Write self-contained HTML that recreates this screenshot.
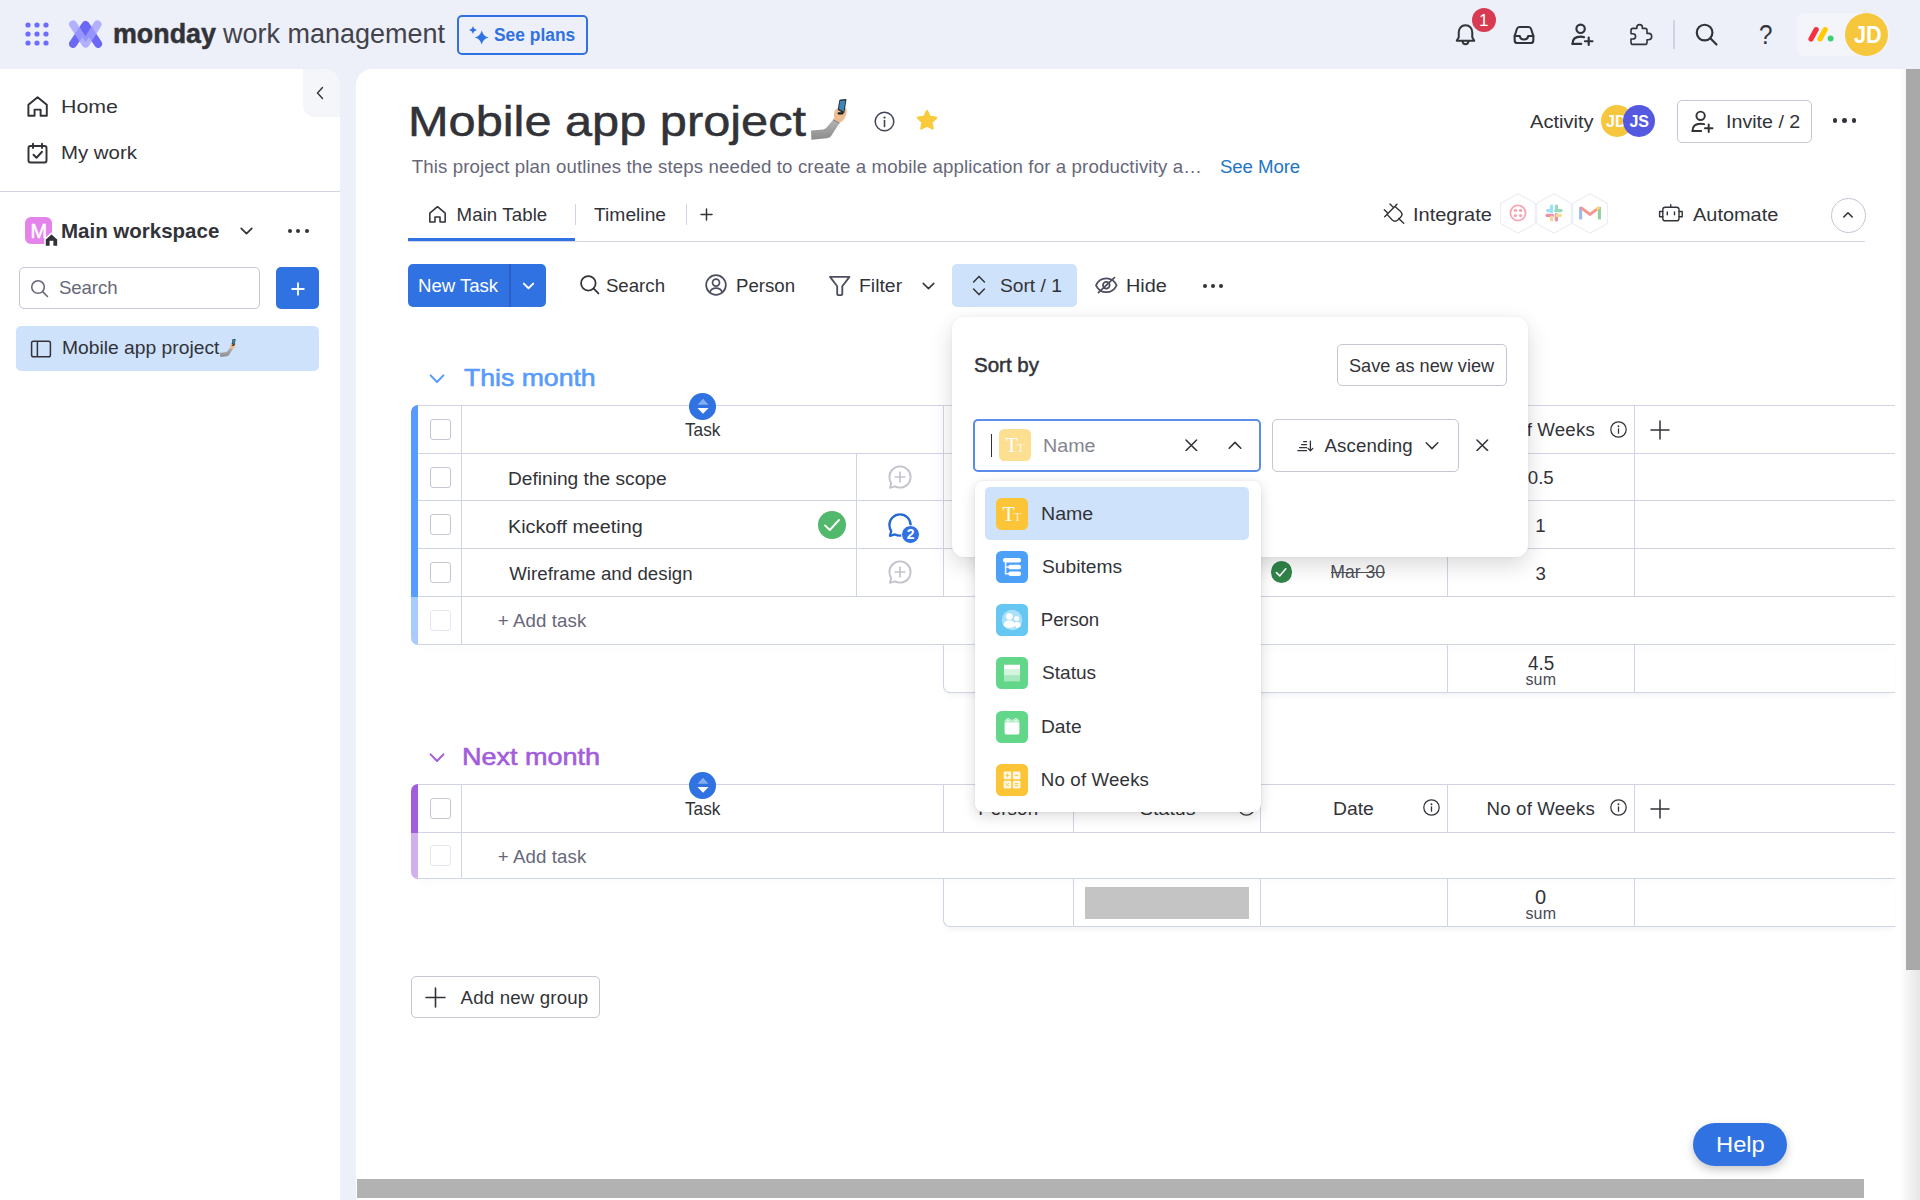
<!DOCTYPE html>
<html lang="en"><head><meta charset="utf-8"><title>Mobile app project</title>
<style>

html,body{margin:0;padding:0}
body{width:1920px;height:1200px;overflow:hidden;position:relative;background:#edeff9;font-family:'Liberation Sans', sans-serif;color:#323338}
div,svg,span{position:absolute;box-sizing:border-box}
.t{white-space:pre;display:block}

</style></head>
<body>
<svg style="left:25px;top:22px;" width="24" height="24" viewBox="0 0 24 24" fill="none"><circle cx="3" cy="3" r="2.6" fill="#6c6cff"/><circle cx="12" cy="3" r="2.6" fill="#6c6cff"/><circle cx="21" cy="3" r="2.6" fill="#6c6cff"/><circle cx="3" cy="12" r="2.6" fill="#6c6cff"/><circle cx="12" cy="12" r="2.6" fill="#6c6cff"/><circle cx="21" cy="12" r="2.6" fill="#6c6cff"/><circle cx="3" cy="21" r="2.6" fill="#6c6cff"/><circle cx="12" cy="21" r="2.6" fill="#6c6cff"/><circle cx="21" cy="21" r="2.6" fill="#6c6cff"/></svg>
<svg style="left:69px;top:19px;" width="34" height="30" viewBox="0 0 34 30" fill="none"><path d="M4.1 24.8 L16.6 6 L29.1 24.8" stroke="#6b68f6" stroke-width="8" stroke-linecap="round" stroke-linejoin="round" fill="none"/><path d="M16.6 9 L21.4 16 L16.6 23 L11.8 16 Z" fill="#6b68f6"/><path d="M4.1 5.4 L16.6 24.6 L28.5 5.4" stroke="#a29fff" stroke-width="8" stroke-linecap="round" stroke-linejoin="round" fill="none" opacity=".78"/></svg>
<span class="t" style="top:18px;font-size:27px;line-height:32px;color:#323338;font-weight:700;transform:scaleX(0.9940);transform-origin:0 0;left:112.97px;-webkit-text-stroke:0.5px #323338;">monday</span>
<span class="t" style="top:18px;font-size:27px;line-height:32px;color:#42434b;transform:scaleX(0.9994);transform-origin:0 0;left:222.92px;">work management</span>
<div style="left:456.7px;top:14.7px;width:131.3px;height:40px;border:2px solid #3072e2;border-radius:5px;"></div>
<svg style="left:465px;top:20px;" width="26" height="26" viewBox="0 0 26 26" fill="none"><path d="M16.7 10.5 C18.24 15.036 19.164 15.96 23.7 17.5 C19.164 19.04 18.24 19.964 16.7 24.5 C15.16 19.964 14.235999999999999 19.04 9.7 17.5 C14.235999999999999 15.96 15.16 15.036 16.7 10.5Z" fill="#3072e2"/><path d="M8 6 C8.88 8.592 9.408 9.12 12 10 C9.408 10.88 8.88 11.408 8 14 C7.12 11.408 6.592 10.88 4 10 C6.592 9.12 7.12 8.592 8 6Z" fill="#3072e2"/></svg>
<span class="t" style="top:24px;font-size:18px;line-height:22px;color:#3072e2;font-weight:700;transform:scaleX(0.9670);transform-origin:0 0;left:494.43px;">See plans</span>
<svg style="left:1453px;top:22px;" width="25" height="25" viewBox="0 0 20 20" fill="none"><path d="M10 2.6 C6.6 2.6 4.6 5.2 4.6 8.2 V12.2 L3 15 H17 L15.4 12.2 V8.2 C15.4 5.2 13.4 2.6 10 2.6Z" stroke="#323338" stroke-width="1.6" stroke-linecap="round" stroke-linejoin="round"/><path d="M7.6 15.4 C7.8 17 8.8 17.8 10 17.8 C11.2 17.8 12.2 17 12.4 15.4" stroke="#323338" stroke-width="1.6" stroke-linecap="round" stroke-linejoin="round"/></svg>
<div style="left:1472px;top:8px;width:24px;height:24px;border-radius:50%;background:#d83a52;"></div>
<span class="t" style="top:10px;font-size:17px;line-height:21px;color:#fff;left:1479.08px;">1</span>
<svg style="left:1511px;top:22px;" width="26" height="26" viewBox="0 0 20 20" fill="none"><path d="M2.8 10.8 L4.6 5.2 C4.9 4.3 5.6 3.8 6.5 3.8 H13.5 C14.4 3.8 15.1 4.3 15.4 5.2 L17.2 10.8 V14 C17.2 15.2 16.3 16.2 15 16.2 H5 C3.7 16.2 2.8 15.2 2.8 14 Z" stroke="#323338" stroke-width="1.6" stroke-linecap="round" stroke-linejoin="round"/><path d="M2.8 10.8 H6.8 C7 12.4 8.2 13.4 10 13.4 C11.8 13.4 13 12.4 13.2 10.8 H17.2" stroke="#323338" stroke-width="1.6" stroke-linecap="round" stroke-linejoin="round"/></svg>
<svg style="left:1569px;top:21px;" width="27" height="27" viewBox="0 0 20 20" fill="none"><circle cx="8.6" cy="5.8" r="3.1" stroke="#323338" stroke-width="1.6" stroke-linecap="round" stroke-linejoin="round"/><path d="M2.6 17 C2.6 13.4 5 11.6 8.6 11.6 C9.6 11.6 10.4 11.7 11.2 12" stroke="#323338" stroke-width="1.6" stroke-linecap="round" stroke-linejoin="round"/><path d="M2.6 17 H9" stroke="#323338" stroke-width="1.6" stroke-linecap="round" stroke-linejoin="round"/><path d="M14.6 12.2 V17.8 M11.8 15 H17.4" stroke="#323338" stroke-width="1.6" stroke-linecap="round" stroke-linejoin="round"/></svg>
<svg style="left:1621px;top:14px;" width="40" height="40" viewBox="0 0 40 40" fill="none"><path d="M12 14.4 H15.8 V13.4 C15.8 11.6 17 10.6 18.6 10.6 C20.2 10.6 21.4 11.6 21.4 13.4 V14.4 H24 C25.2 14.4 26 15.2 26 16.4 V19.4 H27.6 C29.6 19.4 30.7 20.8 30.7 22.6 C30.7 24.4 29.6 25.8 27.6 25.8 H26 V28.4 C26 29.6 25.2 30.4 24 30.4 H12 C10.8 30.4 10 29.6 10 28.4 V25 H11.6 C13.4 25 14.6 23.9 14.6 22.4 C14.6 20.9 13.4 19.8 11.6 19.8 H10 V16.4 C10 15.2 10.8 14.4 12 14.4 Z" stroke="#323338" stroke-width="1.6" stroke-linecap="round" stroke-linejoin="round"/></svg>
<div style="left:1673px;top:20px;width:2px;height:29px;background:#d0d4e4;"></div>
<svg style="left:1693px;top:21px;" width="27" height="27" viewBox="0 0 20 20" fill="none"><circle cx="8.6" cy="8.6" r="5.8" stroke="#323338" stroke-width="1.6" stroke-linecap="round" stroke-linejoin="round"/><path d="M13 13 L17.4 17.4" stroke="#323338" stroke-width="1.6" stroke-linecap="round" stroke-linejoin="round"/></svg>
<span class="t" style="top:18px;font-size:28px;line-height:33px;color:#323338;transform:scaleX(0.8639);transform-origin:0 0;left:1759.44px;">?</span>
<div style="left:1797px;top:13px;width:93px;height:43px;border-radius:8px 24px 24px 8px;background:#f3f5fb;"></div>
<svg style="left:1808px;top:25px;" width="27" height="18" viewBox="0 0 27 18" fill="none"><path d="M3 14 L8.2 4.6" stroke="#f6303f" stroke-width="5.2" stroke-linecap="round"/><path d="M12 14 L17.2 4.6" stroke="#ffcb00" stroke-width="5.2" stroke-linecap="round"/><circle cx="22.6" cy="13.6" r="3" fill="#3ecf6e"/></svg>
<div style="left:1845.3px;top:12.8px;width:42.8px;height:42.8px;border-radius:50%;background:#f6c73c;"></div>
<span class="t" style="top:21px;font-size:23px;line-height:28px;color:#fff;font-weight:700;transform:scaleX(0.9438);transform-origin:0 0;left:1853.50px;">JD</span>
<div style="left:0px;top:69px;width:340px;height:1131px;background:#fff;border-radius:0 16px 0 0;"></div>
<div style="left:303px;top:69px;width:37px;height:48px;background:#f5f6fa;border-radius:0 16px 0 12px;"></div>
<svg style="left:312px;top:84px;" width="16" height="18" viewBox="0 0 16 18" fill="none"><path d="M10.5 3.5 L5.5 9 L10.5 14.5" stroke="#323338" stroke-width="1.4" stroke-linecap="round" stroke-linejoin="round"/></svg>
<svg style="left:24.7px;top:93.6px;" width="25.2" height="25.2" viewBox="0 0 20 20" fill="none"><path d="M2.7 8.6 L10 2.6 L17.3 8.6 V17.2 H12.4 V12.4 H7.6 V17.2 H2.7 Z" stroke="#323338" stroke-width="1.55" stroke-linecap="round" stroke-linejoin="round"/></svg>
<span class="t" style="top:95px;font-size:19px;line-height:23px;color:#323338;transform:scaleX(1.1232);transform-origin:0 0;left:60.63px;">Home</span>
<svg style="left:24.5px;top:140.5px;" width="25" height="25" viewBox="0 0 20 20" fill="none"><rect x="2.8" y="4" width="14.4" height="13.2" rx="1.6" stroke="#323338" stroke-width="1.55" stroke-linecap="round" stroke-linejoin="round"/><path d="M6.4 2.2 V5.6 M13.6 2.2 V5.6" stroke="#323338" stroke-width="1.55" stroke-linecap="round" stroke-linejoin="round"/><path d="M6.8 11 L9.2 13.4 L13.6 8.6" stroke="#323338" stroke-width="1.55" stroke-linecap="round" stroke-linejoin="round"/></svg>
<span class="t" style="top:141px;font-size:19px;line-height:23px;color:#323338;transform:scaleX(1.0741);transform-origin:0 0;left:60.71px;">My work</span>
<div style="left:0px;top:191px;width:340px;height:1px;background:#d0d4e4;"></div>
<div style="left:25px;top:217px;width:27px;height:27px;border-radius:6px;background:#e484ea;"></div>
<span class="t" style="top:219px;font-size:20px;line-height:24px;color:#fff;left:30.56px;-webkit-text-stroke:0.5px #fff;">M</span>
<svg style="left:43.5px;top:232px;" width="15" height="16" viewBox="0 0 15 16" fill="none"><path d="M1 7.2 L7.5 1.4 L14 7.2 V14.6 H1 Z" fill="#323338" stroke="#fff" stroke-width="1.6" stroke-linejoin="round"/><rect x="5.6" y="8.8" width="3.8" height="5.8" fill="#fff"/></svg>
<span class="t" style="top:218px;font-size:21px;line-height:25px;color:#323338;font-weight:700;transform:scaleX(0.9757);transform-origin:0 0;left:60.92px;">Main workspace</span>
<svg style="left:239px;top:224px;" width="15" height="14" viewBox="0 0 15 14" fill="none"><path d="M2.2 4.4 L7.5 9.6 L12.8 4.4" stroke="#323338" stroke-width="1.7" stroke-linecap="round" stroke-linejoin="round"/></svg>
<div style="left:287.5px;top:229px;width:4px;height:4px;border-radius:50%;background:#323338;"></div>
<div style="left:296px;top:229px;width:4px;height:4px;border-radius:50%;background:#323338;"></div>
<div style="left:304.5px;top:229px;width:4px;height:4px;border-radius:50%;background:#323338;"></div>
<div style="left:19px;top:267px;width:241px;height:42px;border:1px solid #c3c6d4;border-radius:5px;background:#fff;"></div>
<svg style="left:29px;top:278px;" width="21" height="21" viewBox="0 0 20 20" fill="none"><circle cx="8.6" cy="8.6" r="6" stroke="#676879" stroke-width="1.5"/><path d="M13.2 13.2 L17.6 17.6" stroke="#676879" stroke-width="1.5" stroke-linecap="round"/></svg>
<span class="t" style="top:276px;font-size:18.67px;line-height:23px;color:#676879;letter-spacing:-0.099px;left:58.92px;">Search</span>
<div style="left:276px;top:267px;width:43px;height:42px;border-radius:5px;background:#3072e2;"></div>
<svg style="left:290.5px;top:281.5px;" width="14" height="14" viewBox="0 0 14 14" fill="none"><path d="M7 1.2 V12.8 M1.2 7 H12.8" stroke="#fff" stroke-width="1.8" stroke-linecap="round"/></svg>
<div style="left:16px;top:326px;width:303px;height:45px;border-radius:5px;background:#cfe2fb;"></div>
<svg style="left:29.5px;top:338.5px;" width="22" height="20" viewBox="0 0 22 20" fill="none"><rect x="1.6" y="2.2" width="18.8" height="15.6" rx="1.8" stroke="#323338" stroke-width="1.5"/><path d="M7.4 2.2 V17.8" stroke="#323338" stroke-width="1.5"/></svg>
<span class="t" style="top:336px;font-size:18.67px;line-height:23px;color:#323338;transform:scaleX(1.0327);transform-origin:0 0;left:61.99px;">Mobile app project</span>
<svg style="left:220.4px;top:338.8px;" width="16.28" height="18.04" viewBox="0 0 37 41" fill="none"><defs><linearGradient id="slv" x1="0" y1="0" x2="0" y2="1"><stop offset="0" stop-color="#b4b4b4"/><stop offset="1" stop-color="#8c8c8c"/></linearGradient></defs><path d="M0 31.4 L12 30.4 C14 30.2 15 29.4 16.4 27.6 L22.4 20.6 L28.6 24 L20.4 36.6 C19.2 38.4 18 39 16 39.2 L0.4 40.8 Z" fill="url(#slv)"/><path d="M22.4 20.6 L28.6 24" stroke="#7b7b7b" stroke-width="1.2"/><path d="M23.2 14 C23.4 10.6 26 9.4 28.4 10 L34.6 8.6 C36.2 10 36 14.6 34 18.4 C32.6 21.2 30 23.6 28.2 23.6 L23.4 20.8 C22.8 18.4 23 16 23.2 14 Z" fill="#ecbc92"/><path d="M28.3 1.2 C28.5 0.6 29 0.4 29.6 0.4 L34.4 0.1 C35.1 0.1 35.5 0.6 35.4 1.3 L33.4 13.6 C33.3 14.2 32.8 14.5 32.2 14.2 L27.3 11.2 C26.8 10.9 26.7 10.5 26.8 10 Z" fill="#27323d"/><path d="M29.1 1.9 L34.4 1.5 L32.6 12.6 L27.9 9.8 Z" fill="#3f86b6"/><rect x="26.6" y="13.2" width="5.6" height="2.2" rx="1" fill="#1d1d1f"/></svg>
<div style="left:356px;top:69px;width:1564px;height:1131px;background:#fff;border-radius:16px 0 0 0;"></div>
<span class="t" style="top:97px;font-size:42px;line-height:49px;color:#323338;transform:scaleX(1.1598);transform-origin:0 0;left:408.48px;-webkit-text-stroke:0.5px #323338;">Mobile app project</span>
<svg style="left:810.8px;top:99.2px;" width="37" height="41" viewBox="0 0 37 41" fill="none"><defs><linearGradient id="slv" x1="0" y1="0" x2="0" y2="1"><stop offset="0" stop-color="#b4b4b4"/><stop offset="1" stop-color="#8c8c8c"/></linearGradient></defs><path d="M0 31.4 L12 30.4 C14 30.2 15 29.4 16.4 27.6 L22.4 20.6 L28.6 24 L20.4 36.6 C19.2 38.4 18 39 16 39.2 L0.4 40.8 Z" fill="url(#slv)"/><path d="M22.4 20.6 L28.6 24" stroke="#7b7b7b" stroke-width="1.2"/><path d="M23.2 14 C23.4 10.6 26 9.4 28.4 10 L34.6 8.6 C36.2 10 36 14.6 34 18.4 C32.6 21.2 30 23.6 28.2 23.6 L23.4 20.8 C22.8 18.4 23 16 23.2 14 Z" fill="#ecbc92"/><path d="M28.3 1.2 C28.5 0.6 29 0.4 29.6 0.4 L34.4 0.1 C35.1 0.1 35.5 0.6 35.4 1.3 L33.4 13.6 C33.3 14.2 32.8 14.5 32.2 14.2 L27.3 11.2 C26.8 10.9 26.7 10.5 26.8 10 Z" fill="#27323d"/><path d="M29.1 1.9 L34.4 1.5 L32.6 12.6 L27.9 9.8 Z" fill="#3f86b6"/><rect x="26.6" y="13.2" width="5.6" height="2.2" rx="1" fill="#1d1d1f"/></svg>
<svg style="left:873.1px;top:109.75px;" width="23" height="23" viewBox="0 0 23 23" fill="none"><circle cx="11.5" cy="11.5" r="9.3" stroke="#43445a" stroke-width="1.5"/><circle cx="11.5" cy="7.6" r="1.1" fill="#43445a"/><path d="M11.5 10.6 V16.4" stroke="#43445a" stroke-width="1.6" stroke-linecap="round"/></svg>
<svg style="left:915.3px;top:108.4px;" width="24" height="23" viewBox="0 0 24 23" fill="none"><path d="M12 3.2 L14.7 9 L21 9.8 L16.4 14.2 L17.6 20.4 L12 17.4 L6.4 20.4 L7.6 14.2 L3 9.8 L9.3 9 Z" fill="#f9ca3a" stroke="#f9ca3a" stroke-width="2.4" stroke-linejoin="round"/></svg>
<span class="t" style="top:155px;font-size:18.67px;line-height:23px;color:#676879;letter-spacing:0.119px;left:411.71px;">This project plan outlines the steps needed to create a mobile application for a productivity a…</span>
<span class="t" style="top:155px;font-size:18.67px;line-height:23px;color:#1f76c2;letter-spacing:-0.079px;left:1219.92px;">See More</span>
<span class="t" style="top:110px;font-size:18.67px;line-height:23px;color:#323338;transform:scaleX(1.0763);transform-origin:0 0;left:1530.00px;">Activity</span>
<div style="left:1601.3px;top:105.4px;width:31.8px;height:31.8px;border-radius:50%;background:#f6c73c;"></div>
<span class="t" style="top:112px;font-size:16px;line-height:19px;color:#fff;font-weight:700;left:1606.05px;">JD</span>
<div style="left:1623px;top:105.4px;width:32px;height:31.8px;border-radius:50%;background:#5559df;"></div>
<span class="t" style="top:112px;font-size:16px;line-height:19px;color:#fff;font-weight:700;left:1629.42px;">JS</span>
<div style="left:1677px;top:100px;width:135px;height:43px;border:1px solid #c3c6d4;border-radius:5px;"></div>
<svg style="left:1688.5px;top:108px;" width="27" height="27" viewBox="0 0 20 20" fill="none"><circle cx="8.6" cy="5.8" r="3.1" stroke="#323338" stroke-width="1.45" stroke-linecap="round" stroke-linejoin="round"/><path d="M2.6 17 C2.6 13.4 5 11.6 8.6 11.6 C9.6 11.6 10.4 11.7 11.2 12" stroke="#323338" stroke-width="1.45" stroke-linecap="round" stroke-linejoin="round"/><path d="M2.6 17 H9" stroke="#323338" stroke-width="1.45" stroke-linecap="round" stroke-linejoin="round"/><path d="M14.6 12.2 V17.8 M11.8 15 H17.4" stroke="#323338" stroke-width="1.45" stroke-linecap="round" stroke-linejoin="round"/></svg>
<span class="t" style="top:110px;font-size:18.67px;line-height:23px;color:#323338;transform:scaleX(1.0525);transform-origin:0 0;left:1726.06px;">Invite / 2</span>
<div style="left:1832.6px;top:118.2px;width:4.6px;height:4.6px;border-radius:50%;background:#323338;"></div>
<div style="left:1842.1px;top:118.2px;width:4.6px;height:4.6px;border-radius:50%;background:#323338;"></div>
<div style="left:1851.6px;top:118.2px;width:4.6px;height:4.6px;border-radius:50%;background:#323338;"></div>
<svg style="left:426.5px;top:203.5px;" width="21" height="21" viewBox="0 0 20 20" fill="none"><path d="M2.7 8.6 L10 2.6 L17.3 8.6 V17.2 H12.4 V12.4 H7.6 V17.2 H2.7 Z" stroke="#323338" stroke-width="1.5" stroke-linecap="round" stroke-linejoin="round"/></svg>
<span class="t" style="top:203px;font-size:18.67px;line-height:23px;color:#323338;letter-spacing:0.092px;left:456.54px;">Main Table</span>
<div style="left:574.5px;top:204px;width:1.5px;height:21px;background:#d0d4e4;"></div>
<span class="t" style="top:203px;font-size:18.67px;line-height:23px;color:#323338;transform:scaleX(1.0325);transform-origin:0 0;left:594.20px;">Timeline</span>
<div style="left:685.5px;top:204px;width:1.5px;height:21px;background:#d0d4e4;"></div>
<svg style="left:700px;top:208px;" width="13" height="13" viewBox="0 0 13 13" fill="none"><path d="M6.5 1 V12 M1 6.5 H12" stroke="#323338" stroke-width="1.5" stroke-linecap="round"/></svg>
<div style="left:408px;top:240.7px;width:1457px;height:1.2px;background:#d0d4e4;"></div>
<div style="left:408px;top:237.9px;width:166.5px;height:3.6px;background:#3072e2;"></div>
<svg style="left:1375px;top:195px;" width="40" height="40" viewBox="0 0 40 40" fill="none"><path d="M22 9.3 L9.7 21.7 M15 9 L18.5 12.6 M9.3 14.7 L13.1 18.4 M23.7 23.5 L28.7 28.3" stroke="#323338" stroke-width="1.4" stroke-linecap="round" stroke-linejoin="round"/><path d="M20.3 11.7 L25.6 16.6 C27.4 18.4 27.4 20.4 25.8 22 L22.8 25 C21 26.6 18.6 26.4 17 24.8 L12.3 19.6" stroke="#323338" stroke-width="1.4" stroke-linecap="round" stroke-linejoin="round"/></svg>
<span class="t" style="top:203px;font-size:18.67px;line-height:23px;color:#323338;transform:scaleX(1.0708);transform-origin:0 0;left:1413.44px;">Integrate</span>
<svg style="left:1498.7px;top:193.2px;" width="38" height="41" viewBox="0 0 38 41" fill="none"><polygon points="19,0.8 36.4,10.6 36.4,30.4 19,40.2 1.6,30.4 1.6,10.6" fill="#fff" stroke="#eceef4" stroke-width="1.2" stroke-linejoin="round"/><circle cx="19" cy="20" r="7.6" stroke="#f0506e" stroke-width="1.8" opacity=".5"/><circle cx="16.4" cy="17.4" r="1.7" fill="#f0506e" opacity=".5"/><circle cx="21.6" cy="17.4" r="1.7" fill="#f0506e" opacity=".5"/><circle cx="16.4" cy="22.6" r="1.7" fill="#f0506e" opacity=".5"/><circle cx="21.6" cy="22.6" r="1.7" fill="#f0506e" opacity=".5"/></svg>
<svg style="left:1535px;top:193.2px;" width="38" height="41" viewBox="0 0 38 41" fill="none"><polygon points="19,0.8 36.4,10.6 36.4,30.4 19,40.2 1.6,30.4 1.6,10.6" fill="#fff" stroke="#eceef4" stroke-width="1.2" stroke-linejoin="round"/><g opacity=".5" stroke-width="3.2" stroke-linecap="round"><path d="M16.6 13 V18.4" stroke="#36c5f0"/><path d="M12.6 17.6 H16" stroke="#36c5f0"/><path d="M21.4 27 V21.6" stroke="#e01e5a"/><path d="M25.4 22.4 H22" stroke="#ecb22e"/><path d="M26 17.6 H20.6" stroke="#2eb67d"/><path d="M21.4 13 V16" stroke="#2eb67d"/><path d="M12 22.4 H17.4" stroke="#e01e5a"/><path d="M16.6 27 V24" stroke="#ecb22e"/></g></svg>
<svg style="left:1571.3px;top:193.2px;" width="38" height="41" viewBox="0 0 38 41" fill="none"><polygon points="19,0.8 36.4,10.6 36.4,30.4 19,40.2 1.6,30.4 1.6,10.6" fill="#fff" stroke="#eceef4" stroke-width="1.2" stroke-linejoin="round"/><g opacity=".55"><path d="M9.6 14 V26.4" stroke="#4285f4" stroke-width="3"/><path d="M28.4 14 V26.4" stroke="#34a853" stroke-width="3"/><path d="M9.6 14.4 L19 21.4 L28.4 14.4" stroke="#ea4335" stroke-width="3" stroke-linejoin="round" fill="none"/><path d="M25.6 16.4 L28.4 14.4" stroke="#fbbc04" stroke-width="3"/></g></svg>
<svg style="left:1650px;top:195px;" width="40" height="40" viewBox="0 0 40 40" fill="none"><rect x="12.8" y="12.2" width="16.2" height="13.6" rx="2.4" stroke="#323338" stroke-width="1.4" stroke-linecap="round" stroke-linejoin="round"/><path d="M20.7 9.6 V12.2 M12.8 16.5 H9.6 V21.7 H12.8 M29 16.5 H32.2 V21.7 H29 M17.3 17 V19.8 M24.5 17 V19.8" stroke="#323338" stroke-width="1.4" stroke-linecap="round" stroke-linejoin="round"/></svg>
<span class="t" style="top:203px;font-size:18.67px;line-height:23px;color:#323338;transform:scaleX(1.0682);transform-origin:0 0;left:1693.00px;">Automate</span>
<div style="left:1830.5px;top:197.5px;width:35px;height:35px;border:1px solid #c3c6d4;border-radius:50%;"></div>
<svg style="left:1841px;top:208px;" width="14" height="14" viewBox="0 0 14 14" fill="none"><path d="M2.8 9 L7 4.8 L11.2 9" stroke="#323338" stroke-width="1.6" stroke-linecap="round" stroke-linejoin="round"/></svg>
<div style="left:408px;top:264px;width:138px;height:43px;background:#3072e2;border-radius:5px;"></div>
<div style="left:509.4px;top:264px;width:1.2px;height:43px;background:#2a5fc7;"></div>
<span class="t" style="top:274px;font-size:18.67px;line-height:23px;color:#fff;letter-spacing:-0.052px;left:418.04px;">New Task</span>
<svg style="left:521px;top:279px;" width="15" height="14" viewBox="0 0 15 14" fill="none"><path d="M2.8 4.6 L7.5 9.2 L12.2 4.6" stroke="#fff" stroke-width="1.9" stroke-linecap="round" stroke-linejoin="round"/></svg>
<svg style="left:578px;top:273px;" width="23.5" height="23.5" viewBox="0 0 20 20" fill="none"><circle cx="8.8" cy="8.8" r="6.2" stroke="#323338" stroke-width="1.5" stroke-linecap="round" stroke-linejoin="round"/><path d="M13.4 13.4 L17.4 17.4" stroke="#323338" stroke-width="1.5" stroke-linecap="round" stroke-linejoin="round"/></svg>
<span class="t" style="top:274px;font-size:18.67px;line-height:23px;color:#323338;letter-spacing:0.001px;left:605.92px;">Search</span>
<svg style="left:703.5px;top:273px;" width="24" height="24" viewBox="0 0 20 20" fill="none"><circle cx="10" cy="10" r="8.2" stroke="#4d4e60" stroke-width="1.45" stroke-linecap="round" stroke-linejoin="round"/><circle cx="10" cy="8" r="2.9" stroke="#4d4e60" stroke-width="1.45" stroke-linecap="round" stroke-linejoin="round"/><path d="M4.8 16.2 C5.6 13.6 7.4 12.6 10 12.6 C12.6 12.6 14.4 13.6 15.2 16.2" stroke="#4d4e60" stroke-width="1.45" stroke-linecap="round" stroke-linejoin="round"/></svg>
<span class="t" style="top:274px;font-size:18.67px;line-height:23px;color:#323338;letter-spacing:-0.024px;left:736.04px;">Person</span>
<svg style="left:826.5px;top:272.5px;" width="25.5" height="25.5" viewBox="0 0 20 20" fill="none"><path d="M2.4 3 H17.6 L12 10.4 V16 C12 16.8 11.4 17.4 10.6 17.4 H9.4 C8.6 17.4 8 16.8 8 16 V10.4 Z" stroke="#4d4e60" stroke-width="1.45" stroke-linecap="round" stroke-linejoin="round"/></svg>
<span class="t" style="top:274px;font-size:18.67px;line-height:23px;color:#323338;transform:scaleX(1.0396);transform-origin:0 0;left:859.48px;">Filter</span>
<svg style="left:920.5px;top:279px;" width="15" height="14" viewBox="0 0 15 14" fill="none"><path d="M2.2 4.4 L7.5 9.6 L12.8 4.4" stroke="#323338" stroke-width="1.5" stroke-linecap="round" stroke-linejoin="round"/></svg>
<div style="left:952px;top:264px;width:124.5px;height:43px;background:#cfe2fb;border-radius:5px;"></div>
<svg style="left:969px;top:273px;" width="20" height="25" viewBox="0 0 20 25" fill="none"><path d="M4.6 9 L10 3.4 L15.4 9 M4.6 16 L10 21.6 L15.4 16" stroke="#323338" stroke-width="1.5" stroke-linecap="round" stroke-linejoin="round"/></svg>
<span class="t" style="top:274px;font-size:18.67px;line-height:23px;color:#323338;transform:scaleX(1.0286);transform-origin:0 0;left:999.90px;">Sort / 1</span>
<svg style="left:1094px;top:273.2px;" width="24.6" height="24.6" viewBox="0 0 20 20" fill="none"><path d="M1.6 10 C3.6 6 6.6 4.4 10 4.4 C13.4 4.4 16.4 6 18.4 10 C16.4 14 13.4 15.6 10 15.6 C6.6 15.6 3.6 14 1.6 10Z" stroke="#4d4e60" stroke-width="1.45" stroke-linecap="round" stroke-linejoin="round"/><circle cx="10" cy="10" r="2.7" stroke="#4d4e60" stroke-width="1.45" stroke-linecap="round" stroke-linejoin="round"/><path d="M3.6 16 L16.6 3.8" stroke="#4d4e60" stroke-width="1.45" stroke-linecap="round" stroke-linejoin="round"/></svg>
<span class="t" style="top:274px;font-size:18.67px;line-height:23px;color:#323338;transform:scaleX(1.0647);transform-origin:0 0;left:1126.45px;">Hide</span>
<div style="left:1202.5px;top:283.6px;width:4px;height:4px;border-radius:50%;background:#323338;"></div>
<div style="left:1210.5px;top:283.6px;width:4px;height:4px;border-radius:50%;background:#323338;"></div>
<div style="left:1218.5px;top:283.6px;width:4px;height:4px;border-radius:50%;background:#323338;"></div>
<svg style="left:428.2px;top:372.2px;" width="18" height="14" viewBox="0 0 18 14" fill="none"><path d="M2.6 3.4 L9 10 L15.4 3.4" stroke="#579bfc" stroke-width="2" stroke-linecap="round" stroke-linejoin="round"/></svg>
<span class="t" style="top:363px;font-size:24px;line-height:29px;color:#579bfc;transform:scaleX(1.1089);transform-origin:0 0;left:463.52px;-webkit-text-stroke:0.6px #579bfc;">This month</span>
<div style="left:411px;top:405px;width:7px;height:192px;background:#579bfc;border-radius:7px 0 0 0;"></div>
<div style="left:411px;top:597px;width:7px;height:48px;background:#a9cbfd;border-radius:0 0 0 7px;"></div>
<div style="left:418px;top:638px;width:1477px;height:7px;box-shadow:0 5px 7px -3px rgba(70,80,120,.13);"></div>
<div style="left:418px;top:638px;width:1477px;height:6px;background:#fff;"></div>
<div style="left:418px;top:405px;width:1477px;height:1px;background:#d0d4e4;"></div>
<div style="left:418px;top:453px;width:1477px;height:1px;background:#d0d4e4;"></div>
<div style="left:418px;top:500px;width:1477px;height:1px;background:#d0d4e4;"></div>
<div style="left:418px;top:548px;width:1477px;height:1px;background:#d0d4e4;"></div>
<div style="left:418px;top:596px;width:1477px;height:1px;background:#d0d4e4;"></div>
<div style="left:418px;top:644px;width:1477px;height:1px;background:#d0d4e4;"></div>
<div style="left:461px;top:405px;width:1px;height:240px;background:#d0d4e4;"></div>
<div style="left:943px;top:405px;width:1px;height:192px;background:#d0d4e4;"></div>
<div style="left:1073px;top:405px;width:1px;height:192px;background:#d0d4e4;"></div>
<div style="left:1260px;top:405px;width:1px;height:192px;background:#d0d4e4;"></div>
<div style="left:1447px;top:405px;width:1px;height:192px;background:#d0d4e4;"></div>
<div style="left:1634px;top:405px;width:1px;height:192px;background:#d0d4e4;"></div>
<div style="left:429.5px;top:419.15px;width:21px;height:21px;border:1px solid #c3c6d4;border-radius:3px;background:#fff;"></div>
<span class="t" style="top:418px;font-size:18.67px;line-height:23px;color:#323338;transform:scaleX(0.9229);transform-origin:0 0;left:684.93px;">Task</span>
<span class="t" style="top:418px;font-size:18.67px;line-height:23px;color:#323338;letter-spacing:0.156px;left:978.14px;">Person</span>
<span class="t" style="top:418px;font-size:18.67px;line-height:23px;color:#323338;transform:scaleX(1.0498);transform-origin:0 0;left:1140.44px;">Status</span>
<svg style="left:1237.3px;top:419.55px;" width="19" height="19" viewBox="0 0 19 19" fill="none"><circle cx="9.5" cy="9.5" r="7.7" stroke="#323338" stroke-width="1.25"/><circle cx="9.5" cy="6.3" r="0.95" fill="#323338"/><path d="M9.5 8.8 V13.2" stroke="#323338" stroke-width="1.3" stroke-linecap="round"/></svg>
<span class="t" style="top:418px;font-size:18.67px;line-height:23px;color:#323338;transform:scaleX(1.0348);transform-origin:0 0;left:1333.49px;">Date</span>
<svg style="left:1422.2px;top:419.55px;" width="19" height="19" viewBox="0 0 19 19" fill="none"><circle cx="9.5" cy="9.5" r="7.7" stroke="#323338" stroke-width="1.25"/><circle cx="9.5" cy="6.3" r="0.95" fill="#323338"/><path d="M9.5 8.8 V13.2" stroke="#323338" stroke-width="1.3" stroke-linecap="round"/></svg>
<span class="t" style="top:418px;font-size:18.67px;line-height:23px;color:#323338;letter-spacing:0.177px;left:1486.54px;">No of Weeks</span>
<svg style="left:1608.9px;top:419.55px;" width="19" height="19" viewBox="0 0 19 19" fill="none"><circle cx="9.5" cy="9.5" r="7.7" stroke="#323338" stroke-width="1.25"/><circle cx="9.5" cy="6.3" r="0.95" fill="#323338"/><path d="M9.5 8.8 V13.2" stroke="#323338" stroke-width="1.3" stroke-linecap="round"/></svg>
<svg style="left:1650px;top:420.25px;" width="20" height="20" viewBox="0 0 20 20" fill="none"><path d="M10 1 V19 M1 10 H19" stroke="#323338" stroke-width="1.5" stroke-linecap="round"/></svg>
<div style="left:429.5px;top:466.65px;width:21px;height:21px;border:1px solid #c3c6d4;border-radius:3px;background:#fff;"></div>
<div style="left:856px;top:453px;width:1px;height:48px;background:#d0d4e4;"></div>
<span class="t" style="top:467px;font-size:18.67px;line-height:23px;color:#323338;transform:scaleX(1.0267);transform-origin:0 0;left:507.70px;">Defining the scope</span>
<svg style="left:887px;top:464.15px;" width="26" height="26" viewBox="0 0 26 26" fill="none"><path d="M13 2.4 C18.9 2.4 23.6 7.1 23.6 13 C23.6 18.9 18.9 23.6 13 23.6 C11.2 23.6 9.5 23.2 8 22.4 L3 23.8 L4.2 19 C3 17.3 2.4 15.2 2.4 13 C2.4 7.1 7.1 2.4 13 2.4Z" stroke="#c3c4cd" stroke-width="1.9" stroke-linejoin="round"/><path d="M13 8.2 V17.8 M8.2 13 H17.8" stroke="#c3c4cd" stroke-width="1.7" stroke-linecap="round"/></svg>
<span class="t" style="top:466px;font-size:18.67px;line-height:23px;color:#323338;left:1527.82px;">0.5</span>
<div style="left:429.5px;top:514.05px;width:21px;height:21px;border:1px solid #c3c6d4;border-radius:3px;background:#fff;"></div>
<div style="left:856px;top:500px;width:1px;height:49px;background:#d0d4e4;"></div>
<span class="t" style="top:515px;font-size:18.67px;line-height:23px;color:#323338;transform:scaleX(1.0584);transform-origin:0 0;left:507.66px;">Kickoff meeting</span>
<div style="left:817.8px;top:510.55px;width:28px;height:28px;border-radius:50%;background:#52b86c;"></div>
<svg style="left:821.8px;top:514.55px;" width="20" height="20" viewBox="0 0 20 20" fill="none"><path d="M3 10.4 L7.8 15 L17 5" stroke="#fff" stroke-width="1.9" stroke-linecap="round" stroke-linejoin="round"/></svg>
<svg style="left:887px;top:511.55px;" width="26" height="26" viewBox="0 0 26 26" fill="none"><path d="M13 2.4 C18.9 2.4 23.6 7.1 23.6 13 C23.6 18.9 18.9 23.6 13 23.6 C11.2 23.6 9.5 23.2 8 22.4 L3 23.8 L4.2 19 C3 17.3 2.4 15.2 2.4 13 C2.4 7.1 7.1 2.4 13 2.4Z" stroke="#2467d9" stroke-width="2.3" stroke-linejoin="round" fill="#fff"/></svg>
<div style="left:901.2px;top:524.75px;width:19px;height:19px;border-radius:50%;background:#3072e2;border:1px solid #fff;"></div>
<span class="t" style="top:525px;font-size:14px;line-height:18px;color:#fff;font-weight:700;left:906.76px;">2</span>
<span class="t" style="top:514px;font-size:18.67px;line-height:23px;color:#323338;left:1535.30px;">1</span>
<div style="left:429.5px;top:561.95px;width:21px;height:21px;border:1px solid #c3c6d4;border-radius:3px;background:#fff;"></div>
<div style="left:856px;top:548px;width:1px;height:49px;background:#d0d4e4;"></div>
<span class="t" style="top:562px;font-size:18.67px;line-height:23px;color:#323338;letter-spacing:0.050px;left:509.20px;">Wireframe and design</span>
<svg style="left:887px;top:559.45px;" width="26" height="26" viewBox="0 0 26 26" fill="none"><path d="M13 2.4 C18.9 2.4 23.6 7.1 23.6 13 C23.6 18.9 18.9 23.6 13 23.6 C11.2 23.6 9.5 23.2 8 22.4 L3 23.8 L4.2 19 C3 17.3 2.4 15.2 2.4 13 C2.4 7.1 7.1 2.4 13 2.4Z" stroke="#c3c4cd" stroke-width="1.9" stroke-linejoin="round"/><path d="M13 8.2 V17.8 M8.2 13 H17.8" stroke="#c3c4cd" stroke-width="1.7" stroke-linecap="round"/></svg>
<span class="t" style="top:562px;font-size:18.67px;line-height:23px;color:#323338;left:1535.59px;">3</span>
<div style="left:1270.6px;top:561.15px;width:21.4px;height:21.4px;border-radius:50%;background:#2f8549;"></div>
<svg style="left:1273.3px;top:563.85px;" width="16" height="16" viewBox="0 0 16 16" fill="none"><path d="M3.4 8.6 L6.8 11.8 L12.8 4.8" stroke="#fff" stroke-width="1.7" stroke-linecap="round" stroke-linejoin="round"/></svg>
<span class="t" style="top:561px;font-size:17.6px;line-height:22px;color:#50515a;letter-spacing:0.030px;left:1330.22px;">Mar 30</span>
<div style="left:1330.8px;top:572.05px;width:54.4px;height:1.2px;background:#50515a;"></div>
<div style="left:429.5px;top:609.8px;width:21px;height:21px;border:1px solid #e6e8f0;border-radius:3px;background:#fff;"></div>
<span class="t" style="top:609px;font-size:18.67px;line-height:23px;color:#676879;letter-spacing:0.103px;left:497.72px;">+ Add task</span>
<div style="left:943px;top:645px;width:952px;height:48px;border-left:1px solid #d0d4e4;border-bottom:1px solid #d0d4e4;border-radius:0 0 0 7px;box-shadow:0 5px 7px -4px rgba(70,80,120,.10);"></div>
<div style="left:1073px;top:644px;width:1px;height:49px;background:#d0d4e4;"></div>
<div style="left:1260px;top:644px;width:1px;height:49px;background:#d0d4e4;"></div>
<div style="left:1447px;top:644px;width:1px;height:49px;background:#d0d4e4;"></div>
<div style="left:1634px;top:644px;width:1px;height:49px;background:#d0d4e4;"></div>
<span class="t" style="top:651px;font-size:20px;line-height:24px;color:#323338;transform:scaleX(0.9442);transform-origin:0 0;left:1527.90px;">4.5</span>
<span class="t" style="top:670px;font-size:16px;line-height:19px;color:#4a4b55;letter-spacing:0.172px;left:1525.45px;">sum</span>
<div style="left:689.4px;top:393.1px;width:26.6px;height:26.6px;border-radius:50%;background:#3072e2;"></div>
<svg style="left:694.7px;top:396.4px;" width="16" height="20" viewBox="0 0 16 20" fill="none"><path d="M8 2.7 L13.5 8.7 H2.5 Z" fill="#fff" opacity=".42"/><path d="M8 17.8 L13.6 12 H2.4 Z" fill="#fff"/></svg>
<svg style="left:428.2px;top:750.8px;" width="18" height="14" viewBox="0 0 18 14" fill="none"><path d="M2.6 3.4 L9 10 L15.4 3.4" stroke="#a25ddc" stroke-width="2" stroke-linecap="round" stroke-linejoin="round"/></svg>
<span class="t" style="top:742px;font-size:24px;line-height:29px;color:#a25ddc;transform:scaleX(1.1249);transform-origin:0 0;left:461.83px;-webkit-text-stroke:0.6px #a25ddc;">Next month</span>
<div style="left:411px;top:784px;width:7px;height:49px;background:#a25ddc;border-radius:7px 0 0 0;"></div>
<div style="left:411px;top:833px;width:7px;height:46px;background:#d2b0ee;border-radius:0 0 0 7px;"></div>
<div style="left:418px;top:872px;width:1477px;height:7px;box-shadow:0 5px 7px -3px rgba(70,80,120,.13);"></div>
<div style="left:418px;top:872px;width:1477px;height:6px;background:#fff;"></div>
<div style="left:418px;top:784px;width:1477px;height:1px;background:#d0d4e4;"></div>
<div style="left:418px;top:832px;width:1477px;height:1px;background:#d0d4e4;"></div>
<div style="left:418px;top:878px;width:1477px;height:1px;background:#d0d4e4;"></div>
<div style="left:461px;top:784px;width:1px;height:95px;background:#d0d4e4;"></div>
<div style="left:943px;top:784px;width:1px;height:49px;background:#d0d4e4;"></div>
<div style="left:1073px;top:784px;width:1px;height:49px;background:#d0d4e4;"></div>
<div style="left:1260px;top:784px;width:1px;height:49px;background:#d0d4e4;"></div>
<div style="left:1447px;top:784px;width:1px;height:49px;background:#d0d4e4;"></div>
<div style="left:1634px;top:784px;width:1px;height:49px;background:#d0d4e4;"></div>
<div style="left:429.5px;top:797.95px;width:21px;height:21px;border:1px solid #c3c6d4;border-radius:3px;background:#fff;"></div>
<span class="t" style="top:797px;font-size:18.67px;line-height:23px;color:#323338;transform:scaleX(0.9229);transform-origin:0 0;left:684.93px;">Task</span>
<span class="t" style="top:797px;font-size:18.67px;line-height:23px;color:#323338;letter-spacing:0.156px;left:978.14px;">Person</span>
<span class="t" style="top:797px;font-size:18.67px;line-height:23px;color:#323338;transform:scaleX(1.0498);transform-origin:0 0;left:1140.44px;">Status</span>
<svg style="left:1237.3px;top:798.35px;" width="19" height="19" viewBox="0 0 19 19" fill="none"><circle cx="9.5" cy="9.5" r="7.7" stroke="#323338" stroke-width="1.25"/><circle cx="9.5" cy="6.3" r="0.95" fill="#323338"/><path d="M9.5 8.8 V13.2" stroke="#323338" stroke-width="1.3" stroke-linecap="round"/></svg>
<span class="t" style="top:797px;font-size:18.67px;line-height:23px;color:#323338;transform:scaleX(1.0348);transform-origin:0 0;left:1333.49px;">Date</span>
<svg style="left:1422.2px;top:798.35px;" width="19" height="19" viewBox="0 0 19 19" fill="none"><circle cx="9.5" cy="9.5" r="7.7" stroke="#323338" stroke-width="1.25"/><circle cx="9.5" cy="6.3" r="0.95" fill="#323338"/><path d="M9.5 8.8 V13.2" stroke="#323338" stroke-width="1.3" stroke-linecap="round"/></svg>
<span class="t" style="top:797px;font-size:18.67px;line-height:23px;color:#323338;letter-spacing:0.177px;left:1486.54px;">No of Weeks</span>
<svg style="left:1608.9px;top:798.35px;" width="19" height="19" viewBox="0 0 19 19" fill="none"><circle cx="9.5" cy="9.5" r="7.7" stroke="#323338" stroke-width="1.25"/><circle cx="9.5" cy="6.3" r="0.95" fill="#323338"/><path d="M9.5 8.8 V13.2" stroke="#323338" stroke-width="1.3" stroke-linecap="round"/></svg>
<svg style="left:1650px;top:799.05px;" width="20" height="20" viewBox="0 0 20 20" fill="none"><path d="M10 1 V19 M1 10 H19" stroke="#323338" stroke-width="1.5" stroke-linecap="round"/></svg>
<div style="left:429.5px;top:845.15px;width:21px;height:21px;border:1px solid #e6e8f0;border-radius:3px;background:#fff;"></div>
<span class="t" style="top:845px;font-size:18.67px;line-height:23px;color:#676879;letter-spacing:0.103px;left:497.72px;">+ Add task</span>
<div style="left:943px;top:879px;width:952px;height:48px;border-left:1px solid #d0d4e4;border-bottom:1px solid #d0d4e4;border-radius:0 0 0 7px;box-shadow:0 5px 7px -4px rgba(70,80,120,.10);"></div>
<div style="left:1073px;top:878px;width:1px;height:49px;background:#d0d4e4;"></div>
<div style="left:1260px;top:878px;width:1px;height:49px;background:#d0d4e4;"></div>
<div style="left:1447px;top:878px;width:1px;height:49px;background:#d0d4e4;"></div>
<div style="left:1634px;top:878px;width:1px;height:49px;background:#d0d4e4;"></div>
<div style="left:1085.3px;top:887.3px;width:164px;height:31.6px;background:#c4c4c4;"></div>
<span class="t" style="top:885px;font-size:20px;line-height:24px;color:#323338;left:1534.97px;">0</span>
<span class="t" style="top:904px;font-size:16px;line-height:19px;color:#4a4b55;letter-spacing:0.172px;left:1525.45px;">sum</span>
<div style="left:689.4px;top:772px;width:26.6px;height:26.6px;border-radius:50%;background:#3072e2;"></div>
<svg style="left:694.7px;top:775.3px;" width="16" height="20" viewBox="0 0 16 20" fill="none"><path d="M8 2.7 L13.5 8.7 H2.5 Z" fill="#fff" opacity=".42"/><path d="M8 17.8 L13.6 12 H2.4 Z" fill="#fff"/></svg>
<div style="left:411px;top:976px;width:189px;height:42.2px;border:1px solid #c3c6d4;border-radius:5px;"></div>
<svg style="left:425.3px;top:986.9px;" width="21" height="21" viewBox="0 0 21.0 21.0" fill="none"><path d="M10.5 1 V20.0 M1 10.5 H20.0" stroke="#323338" stroke-width="1.6" stroke-linecap="round"/></svg>
<span class="t" style="top:986px;font-size:18.67px;line-height:23px;color:#323338;letter-spacing:0.187px;left:460.50px;">Add new group</span>
<div style="left:357px;top:1179px;width:1507px;height:19px;background:#b2b2b2;"></div>
<div style="left:1900px;top:69px;width:20px;height:1131px;background:linear-gradient(90deg,rgba(255,255,255,0) 0%,#f4f4f4 40%,#e6e6e6 100%);"></div>
<div style="left:1905.5px;top:69px;width:14.5px;height:901px;background:#a9a9a9;"></div>
<div style="left:1693px;top:1122.5px;width:93.5px;height:43.5px;background:#3072e2;border-radius:22px;box-shadow:0 4px 10px rgba(0,0,0,.22);"></div>
<span class="t" style="top:1131px;font-size:22.5px;line-height:27px;color:#fff;transform:scaleX(1.0548);transform-origin:0 0;left:1715.65px;">Help</span>
<div style="left:952px;top:317px;width:576.1px;height:240px;background:#fff;border-radius:12px;box-shadow:0 8px 22px rgba(0,0,0,.15),0 0 4px rgba(0,0,0,.04);"></div>
<span class="t" style="top:352px;font-size:21px;line-height:25px;color:#323338;transform:scaleX(0.9778);transform-origin:0 0;left:973.50px;-webkit-text-stroke:0.5px #323338;">Sort by</span>
<div style="left:1337px;top:344px;width:170px;height:42px;border:1px solid #c3c6d4;border-radius:5px;"></div>
<span class="t" style="top:354px;font-size:18.67px;line-height:23px;color:#323338;transform:scaleX(0.9720);transform-origin:0 0;left:1348.93px;">Save as new view</span>
<div style="left:973px;top:419px;width:288px;height:53px;border:2px solid #5a8ce9;border-radius:5px;background:#fff;"></div>
<div style="left:990.6px;top:434px;width:1.6px;height:23px;background:#323338;"></div>
<svg style="left:998.8px;top:429.2px;opacity:0.55;" width="32" height="32" viewBox="0 0 32 32" fill="none"><rect width="32" height="32" rx="5.5" fill="#fbc537"/><text x="6.4" y="22.8" font-family="Liberation Serif, serif" font-size="20" fill="#fff">T</text><text x="17.4" y="23" font-family="Liberation Serif, serif" font-size="13.5" fill="#fff" opacity=".7">T</text></svg>
<span class="t" style="top:434px;font-size:18.67px;line-height:23px;color:#84858f;transform:scaleX(1.0536);transform-origin:0 0;left:1043.16px;">Name</span>
<svg style="left:1185.4px;top:438.9px;" width="12.6" height="12.6" viewBox="0 0 12.6 12.6" fill="none"><path d="M1 1 L11.6 11.6 M11.6 1 L1 11.6" stroke="#323338" stroke-width="1.5" stroke-linecap="round"/></svg>
<svg style="left:1226px;top:438px;" width="18" height="14" viewBox="0 0 18 14" fill="none"><path d="M3.2 10.2 L9 4.4 L14.8 10.2" stroke="#323338" stroke-width="1.6" stroke-linecap="round" stroke-linejoin="round"/></svg>
<div style="left:1272px;top:419px;width:186.5px;height:53px;border:1px solid #c3c6d4;border-radius:5px;background:#fff;"></div>
<svg style="left:1296.5px;top:437.5px;" width="18" height="16" viewBox="0 0 18 16" fill="none"><path d="M13.4 3.2 V12.6 M11 10.4 L13.4 12.9 L15.8 10.4" stroke="#323338" stroke-width="1.3" stroke-linecap="round" stroke-linejoin="round" fill="none"/><path d="M6.6 3.6 H9.6 M4.6 6.6 H9.6 M2.6 9.6 H9.6 M0.8 12.6 H9.6" stroke="#323338" stroke-width="1.3" stroke-linecap="round"/></svg>
<span class="t" style="top:434px;font-size:18.67px;line-height:23px;color:#323338;letter-spacing:0.115px;left:1324.50px;">Ascending</span>
<svg style="left:1423px;top:438.8px;" width="18" height="14" viewBox="0 0 18 14" fill="none"><path d="M3.2 3.8 L9 9.6 L14.8 3.8" stroke="#323338" stroke-width="1.5" stroke-linecap="round" stroke-linejoin="round"/></svg>
<svg style="left:1476.1px;top:438.9px;" width="12.6" height="12.6" viewBox="0 0 12.6 12.6" fill="none"><path d="M1 1 L11.6 11.6 M11.6 1 L1 11.6" stroke="#323338" stroke-width="1.5" stroke-linecap="round"/></svg>
<div style="left:974.5px;top:481.3px;width:286.5px;height:330.7px;background:#fff;border-radius:8px;box-shadow:0 4px 14px rgba(0,0,0,.15),0 0 3px rgba(0,0,0,.07);"></div>
<div style="left:985.4px;top:487px;width:264.1px;height:52.7px;background:#cfe2fb;border-radius:5px;"></div>
<svg style="left:996.2px;top:497.5px;" width="32" height="32" viewBox="0 0 32 32" fill="none"><rect width="32" height="32" rx="5.5" fill="#fbc537"/><text x="6.4" y="22.8" font-family="Liberation Serif, serif" font-size="20" fill="#fff">T</text><text x="17.4" y="23" font-family="Liberation Serif, serif" font-size="13.5" fill="#fff" opacity=".7">T</text></svg>
<span class="t" style="top:502px;font-size:18.67px;line-height:23px;color:#323338;transform:scaleX(1.0494);transform-origin:0 0;left:1040.77px;">Name</span>
<svg style="left:996.2px;top:550.8px;" width="32" height="32" viewBox="0 0 32 32" fill="none"><rect width="32" height="32" rx="5.5" fill="#4da0f7"/><path d="M8.2 9 H9.6 V22.8 H13" stroke="#fff" stroke-width="1.5" fill="none" opacity=".9"/><path d="M9.6 16 H13" stroke="#fff" stroke-width="1.5" opacity=".9"/><rect x="7" y="7" width="18" height="4.4" rx="2" fill="#fff"/><rect x="12.4" y="13.8" width="12.6" height="4.4" rx="2" fill="#fff"/><rect x="12.4" y="20.6" width="12.6" height="4.4" rx="2" fill="#fff"/></svg>
<span class="t" style="top:555px;font-size:18.67px;line-height:23px;color:#323338;transform:scaleX(1.0298);transform-origin:0 0;left:1041.70px;">Subitems</span>
<svg style="left:996.2px;top:604.1px;" width="32" height="32" viewBox="0 0 32 32" fill="none"><rect width="32" height="32" rx="5.5" fill="#66c8f2"/><circle cx="16" cy="16" r="10.2" fill="#fff" opacity=".45"/><circle cx="13.4" cy="12.6" r="3.3" fill="#fff"/><path d="M7.6 21.4 C8 17.8 10.4 16.6 13.4 16.6 C16.4 16.6 18.8 17.8 19.2 21.4 C17.6 24.4 9.8 24.6 7.6 21.4Z" fill="#fff"/><circle cx="20.6" cy="14.6" r="2.5" fill="#fff"/><path d="M18.4 19 C19.2 18.2 20 18 21 18 C23 18 24.6 19 25 21.4 C24 23.2 21.8 24 20 24 Z" fill="#fff"/></svg>
<span class="t" style="top:608px;font-size:18.67px;line-height:23px;color:#323338;letter-spacing:-0.144px;left:1040.84px;">Person</span>
<svg style="left:996.2px;top:657.4px;" width="32" height="32" viewBox="0 0 32 32" fill="none"><rect width="32" height="32" rx="5.5" fill="#62d689"/><rect x="8" y="7.8" width="16" height="16.6" fill="#fff" opacity=".45"/><rect x="8" y="7.8" width="16" height="4.6" fill="#fff"/><rect x="8" y="12.4" width="16" height="5.8" fill="#fff" opacity=".5"/></svg>
<span class="t" style="top:661px;font-size:18.67px;line-height:23px;color:#323338;transform:scaleX(1.0227);transform-origin:0 0;left:1041.70px;">Status</span>
<svg style="left:996.2px;top:710.7px;" width="32" height="32" viewBox="0 0 32 32" fill="none"><rect width="32" height="32" rx="5.5" fill="#62d689"/><rect x="8.6" y="11.6" width="14.8" height="11.8" rx="1.4" fill="#fff"/><rect x="8.6" y="8.4" width="14.8" height="5" rx="1.4" fill="#fff" opacity=".55"/><circle cx="12.2" cy="8.6" r="1.2" fill="none" stroke="#fff" stroke-width=".9"/><circle cx="19.8" cy="8.6" r="1.2" fill="none" stroke="#fff" stroke-width=".9"/></svg>
<span class="t" style="top:715px;font-size:18.67px;line-height:23px;color:#323338;transform:scaleX(1.0294);transform-origin:0 0;left:1040.80px;">Date</span>
<svg style="left:996.2px;top:764px;" width="32" height="32" viewBox="0 0 32 32" fill="none"><rect width="32" height="32" rx="5.5" fill="#fbc537"/><rect x="7.6" y="7.6" width="7.6" height="7.6" rx="1.2" fill="#fff" opacity=".85"/><rect x="16.8" y="7.6" width="7.6" height="7.6" rx="1.2" fill="#fff" opacity=".85"/><rect x="7.6" y="16.8" width="7.6" height="7.6" rx="1.2" fill="#fff" opacity=".85"/><rect x="16.8" y="16.8" width="7.6" height="7.6" rx="1.2" fill="#fff" opacity=".85"/><path d="M9.6 11.4 H13.2 M11.4 9.6 V13.2 M18.8 11.4 H22.4 M10 19.2 L12.8 22 M12.8 19.2 L10 22 M18.8 19.6 H22.4 M18.8 21.6 H22.4" stroke="#fbc537" stroke-width="1"/></svg>
<span class="t" style="top:768px;font-size:18.67px;line-height:23px;color:#323338;letter-spacing:0.167px;left:1040.84px;">No of Weeks</span>
</body></html>
